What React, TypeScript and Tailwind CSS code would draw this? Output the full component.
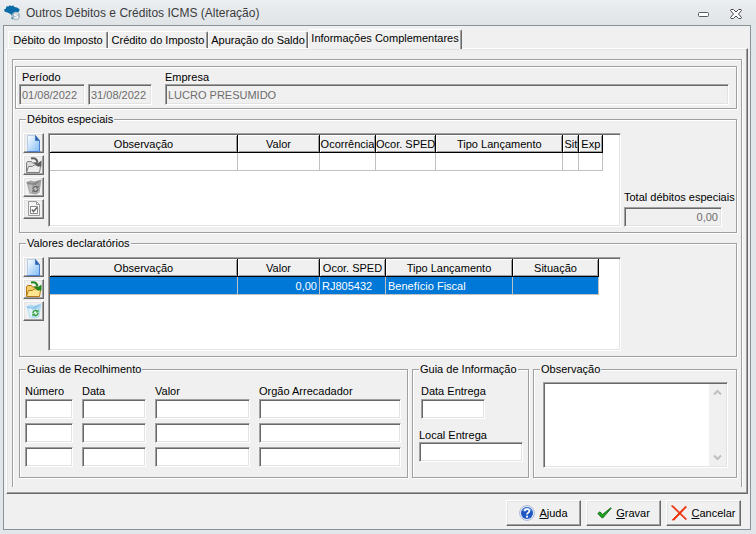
import type { ReactNode } from 'react';
import clsx from 'clsx';

const SUNKEN =
  'border border-t-[#a0a0a0] border-l-[#a0a0a0] border-r-white border-b-white shadow-[inset_1px_1px_0_#696969,inset_-1px_-1px_0_#e3e3e3]';
const RAISED =
  'border border-t-white border-l-white border-r-[#696969] border-b-[#696969] shadow-[inset_-1px_-1px_0_#a0a0a0,inset_1px_1px_0_#e3e3e3]';
const ETCHED = 'border border-[#a0a0a0] shadow-[1px_1px_0_#fff,inset_1px_1px_0_#fff]';

interface Column {
  title: string;
  width: string;
  align?: 'right';
}

const debitColumns: Column[] = [
  { title: 'Observação', width: 'w-[188px]' },
  { title: 'Valor', width: 'w-[82px]', align: 'right' },
  { title: 'Ocorrência', width: 'w-[56px]' },
  { title: 'Ocor. SPED', width: 'w-[60px]' },
  { title: 'Tipo Lançamento', width: 'w-[127px]' },
  { title: 'Sit', width: 'w-[16px]' },
  { title: 'Exp', width: 'w-[24px]' },
];

const valueColumns: Column[] = [
  { title: 'Observação', width: 'w-[188px]' },
  { title: 'Valor', width: 'w-[82px]', align: 'right' },
  { title: 'Ocor. SPED', width: 'w-[66px]' },
  { title: 'Tipo Lançamento', width: 'w-[127px]' },
  { title: 'Situação', width: 'w-[86px]' },
];

const BrazilIcon = () => (
  <svg width="17" height="16" viewBox="0 0 17 16" aria-hidden="true">
    <path
      d="M0 4.5 2 3.4 2.4 1.2 4.5 1.6 5.6.2 7 1 9.4.4 10.4 2 13 2.6 15.6 4.2 15.2 6.2 13.8 7.6 13.4 10.4 11.2 11.6 10 13 8.6 14.6 7.2 13.2 8 11.6 7.4 9.8 5.6 8.4 3.4 7.4.8 6.8Z"
      fill="#0b6ba6"
    />
    <circle cx="12" cy="11" r="4.2" fill="#a9bac4" />
    <path
      d="M13.8 9.3c-.8-.8-3.1-.8-3.1.5 0 1.5 3.1.8 3.1 2.3 0 1.3-2.5 1.3-3.4.4"
      fill="none"
      stroke="#fff"
      strokeWidth="1.2"
    />
  </svg>
);

const PageIcon = ({ id }: { id: string }) => (
  <svg width="15" height="17" viewBox="0 0 15 17" aria-hidden="true">
    <defs>
      <linearGradient id={id} x1="0" y1="0" x2="1" y2="1">
        <stop offset="0" stopColor="#fff" />
        <stop offset="1" stopColor="#7fbcf4" />
      </linearGradient>
    </defs>
    <path d="M1.5.5h8l4 5v11h-12z" fill={`url(#${id})`} />
    <path d="M1.5 16V.5h8" fill="none" stroke="#b5cbea" />
    <path d="M13.5 5.5v11h-12" fill="none" stroke="#4f7fd0" />
    <path d="M9.5.5v5h4z" fill="#2a62b4" stroke="#3a6cb5" strokeWidth=".8" />
  </svg>
);

const FolderIcon = ({ disabled }: { disabled?: boolean }) => {
  const line = disabled ? '#7d7d7d' : '#b57a13';
  const arrow = disabled ? '#5f5f5f' : '#23841f';
  return (
    <svg width="17" height="17" viewBox="0 0 17 17" aria-hidden="true">
      <path d="M1.5 15V6l1-1.5h4l1 1.5h5v8z" fill={disabled ? '#dadada' : '#f3cf6b'} stroke={line} />
      <path d="M1.5 15.5 3.5 9.500h4l1.500-1.500h5l1.500 1.500-1 6z" fill={disabled ? '#ededed' : '#ffe58f'} stroke={line} />
      <path d="M6 1.500c4-1 6 .5 6.500 4" fill="none" stroke={arrow} strokeWidth="2" />
      <path d="M8.500 5.500h3l1.500.5 3.500-2.500v6h-4z" fill={arrow} />
    </svg>
  );
};

const BinIcon = ({ disabled }: { disabled?: boolean }) => {
  const mark = disabled ? '#666' : '#2c9a3a';
  return (
    <svg width="16" height="16" viewBox="0 0 16 16" aria-hidden="true">
      <path d="M.5 3l4.500-1.500 3 1L15.500.5 13.500 13.500 10 15.500 3.500 14.500Z" fill={disabled ? '#a3a3a3' : '#b4dcf3'} />
      <path d="M.5 3l5.500 1.500L15 1l-3.500 3.500L9 6 1.500 5Z" fill={disabled ? '#888' : '#8fc4ea'} />
      <path d="M2.500 5.500 6 6v8l-2-.5Z" fill={disabled ? '#bdbdbd' : '#e0f3fd'} />
      <circle cx="9.500" cy="10" r="3.600" fill={disabled ? '#c4c4c4' : '#e4f7ee'} />
      <path d="M7 10c0-2.500 3-3.300 4.500-1.500M12 10c0 2.500-3 3.300-4.500 1.500" fill="none" stroke={mark} strokeWidth="1.400" />
      <path d="M12.600 6.800v2.800H9.800zM6.400 13.200v-2.800h2.800z" fill={mark} />
    </svg>
  );
};

const CheckPageIcon = () => (
  <svg width="16" height="16" viewBox="0 0 16 16" aria-hidden="true">
    <path d="M2.500.5h8l3 3v11h-11z" fill="#f4f4f4" stroke="#9a9a9a" />
    <path d="M10.500.5v3h3" fill="none" stroke="#9a9a9a" />
    <path d="M4.500 5.500h7v7h-7z" fill="#fff" stroke="#858585" />
    <path d="M5.800 8.500 7.500 10.500 11 6.500" fill="none" stroke="#666" strokeWidth="1.500" />
  </svg>
);

const HelpIcon = () => (
  <svg width="16" height="16" viewBox="0 0 16 16" aria-hidden="true">
    <circle cx="8" cy="8" r="7.500" fill="#dfe5f3" stroke="#b3bfdc" />
    <circle cx="8" cy="8" r="6" fill="#1f56c3" />
    <path d="M3 6a5.300 5.300 0 0 1 10 0c-3-1.500-7-1.500-10 0z" fill="#6f9cec" />
    <path d="M5.800 6.300c0-3 4.600-2.800 4.600-.3C10.400 7.600 8 7.700 8 9.500" fill="none" stroke="#fff" strokeWidth="1.700" />
    <circle cx="8" cy="11.700" r="1.100" fill="#fff" />
  </svg>
);

const SaveIcon = () => (
  <svg width="15" height="12" viewBox="0 0 15 12" aria-hidden="true">
    <path d="M.8 6.500 3 4.800 5.600 7.400 13.800.8 14.200 1.300 6 10.800 4.800 10.800Z" fill="#1fa51b" stroke="#0d5c10" strokeWidth=".8" />
  </svg>
);

const CancelIcon = () => (
  <svg width="16" height="16" viewBox="0 0 16 16" aria-hidden="true">
    <path d="M.5 1 2 .8 15.500 14 14.500 14.500ZM14.500 1.200 15.500 2 3.200 15 1.200 15Z" fill="#ee3410" stroke="#ee3410" strokeWidth=".9" />
  </svg>
);

const ToolButton = ({ label, disabled, children }: { label: string; disabled?: boolean; children: ReactNode }) => (
  <button
    type="button"
    aria-label={label}
    disabled={disabled}
    className={clsx('flex h-5 w-[21px] items-center justify-center bg-[#f0f0f0]', RAISED)}
  >
    {children}
  </button>
);

const Field = ({ label }: { label: string }) => (
  <input aria-label={label} className={clsx('block h-5 w-full min-w-0 bg-white px-1', SUNKEN)} />
);

const Group = ({ title, className, children }: { title: string; className?: string; children: ReactNode }) => (
  <fieldset className={clsx('min-w-0', ETCHED, className)}>
    <legend className="ml-[6px] bg-[#f0f0f0] px-px whitespace-nowrap">{title}</legend>
    {children}
  </fieldset>
);

const DataGrid = ({ columns, row, selected }: { columns: Column[]; row: string[]; selected?: boolean }) => (
  <div className={clsx('h-[94px] min-w-0 flex-1 overflow-hidden bg-white p-px', SUNKEN)}>
    <table className="table-fixed border-separate border-spacing-0">
      <thead>
        <tr className="h-[18px]">
          {columns.map((col) => (
            <th
              key={col.title}
              scope="col"
              className={clsx(
                'overflow-hidden border-r border-b border-black bg-[#f0f0f0] p-0 text-center font-normal whitespace-nowrap shadow-[inset_1px_1px_0_#fff,inset_-1px_-1px_0_#a0a0a0]',
                col.width,
              )}
            >
              {col.title}
            </th>
          ))}
        </tr>
      </thead>
      <tbody>
        <tr className={clsx('h-[18px]', selected && 'bg-[#0078d7] text-white')}>
          {columns.map((col, i) => (
            <td
              key={col.title}
              className={clsx(
                'border-r border-b border-[#c0c0c0] py-0 whitespace-nowrap',
                col.align === 'right' ? 'pr-[2px] text-right' : 'pl-[2px]',
              )}
            >
              {row[i]}
            </td>
          ))}
        </tr>
      </tbody>
    </table>
  </div>
);

const tabs = ['Débito do Imposto', 'Crédito do Imposto', 'Apuração do Saldo', 'Informações Complementares'];

const Tabs = () => (
  <div role="tablist" className="relative z-10 flex h-[23px] items-end pl-1">
    {tabs.map((tab, i) => {
      const active = i === tabs.length - 1;
      return (
        <button
          key={tab}
          type="button"
          role="tab"
          aria-selected={active}
          className={clsx(
            'rounded-t-[2px] border-t border-r border-l border-t-white border-r-[#696969] border-l-white bg-[#f0f0f0] whitespace-nowrap shadow-[inset_-1px_0_0_#a0a0a0]',
            active ? 'h-5 w-[154px] pb-1' : 'mb-px h-[17px] w-[100px]',
          )}
        >
          {tab}
        </button>
      );
    })}
  </div>
);

const guideColumns = ['Número', 'Data', 'Valor', 'Orgão Arrecadador'];

const actions = [
  { key: 'A', rest: 'juda', icon: <HelpIcon /> },
  { key: 'G', rest: 'ravar', icon: <SaveIcon /> },
  { key: 'C', rest: 'ancelar', icon: <CancelIcon /> },
];

export default function App() {
  return (
    <div className="flex min-h-screen flex-col bg-[#e1e6ea] font-['Liberation_Sans',Arial,sans-serif] text-[11px] leading-[14px] text-black">
      <header className="flex h-[25px] items-center bg-linear-to-b from-[#eceef1] to-[#dfe4e7] pr-[14px] pl-1 text-[#3c3c3c]">
        <BrazilIcon />
        <h1 className="ml-[5px] flex-1 text-[12px]">Outros Débitos e Créditos ICMS (Alteração)</h1>
        <button type="button" aria-label="Minimizar" className="mr-[21px] pt-1">
          <svg width="11" height="5" viewBox="0 0 11 5">
            <rect x=".5" y=".5" width="10" height="4" rx="1" fill="#fff" stroke="#55585d" />
          </svg>
        </button>
        <button type="button" aria-label="Fechar" className="pt-[2px]">
          <svg width="12" height="10" viewBox="0 0 12 10">
            <path
              d="M1 .5h2.500L6 3 8.500.5H11L11.500 1.500 8.500 5l3 3.500-.5 1H8.500L6 7 3.500 9.500H1L.5 8.500 3.500 5 .5 1.500z"
              fill="#fff"
              stroke="#4a4d52"
            />
          </svg>
        </button>
      </header>

      <main className="mr-[5px] mb-1 ml-[3px] flex flex-1 flex-col border border-[#8a9296] bg-[#f0f0f0]">
        <Tabs />

        <div className={clsx('mx-[2px] -mt-px px-[5px] pt-[10px] pb-[6px]', RAISED)}>
          <div className="border border-b-0 border-[#a0a0a0] pt-[6px] pr-[4px] pb-[9px] pl-[2px] shadow-[1px_0_0_#fff,inset_1px_1px_0_#fff]">
            <div className={clsx('flex h-[43px] px-[3px] pt-[3px]', ETCHED)}>
              <div className="mr-[13px]">
                <label htmlFor="periodo-inicio" className="block pl-[3px]">
                  Período
                </label>
                <div className="flex gap-[3px]">
                  <input
                    id="periodo-inicio"
                    disabled
                    defaultValue="01/08/2022"
                    className={clsx('h-[21px] w-[66px] px-[2px] text-[#6d6d6d]', SUNKEN)}
                  />
                  <input
                    aria-label="Período final"
                    disabled
                    defaultValue="31/08/2022"
                    className={clsx('h-[21px] w-[64px] px-[2px] text-[#6d6d6d]', SUNKEN)}
                  />
                </div>
              </div>
              <div className="mr-[4px] flex-1">
                <label htmlFor="empresa" className="block">
                  Empresa
                </label>
                <input
                  id="empresa"
                  disabled
                  defaultValue="LUCRO PRESUMIDO"
                  className={clsx('h-[21px] w-full px-[2px] text-[#6d6d6d]', SUNKEN)}
                />
              </div>
            </div>

            <div className="pl-1">
              <Group title="Débitos especiais" className="mt-[3px] pb-[5px]">
                <div className="flex pt-[7px] pl-[3px]">
                  <div className="mr-[4px] flex flex-col gap-[2px]">
                    <ToolButton label="Novo débito">
                      <PageIcon id="page-debito" />
                    </ToolButton>
                    <ToolButton label="Abrir débito" disabled>
                      <FolderIcon disabled />
                    </ToolButton>
                    <ToolButton label="Excluir débito" disabled>
                      <BinIcon disabled />
                    </ToolButton>
                    <ToolButton label="Conferir débito" disabled>
                      <CheckPageIcon />
                    </ToolButton>
                  </div>
                  <DataGrid columns={debitColumns} row={['', '', '', '', '', '', '']} />
                  <div className="flex w-[115px] flex-col justify-end pl-[3px]">
                    <label htmlFor="total-debitos" className="mb-[3px] whitespace-nowrap">
                      Total débitos especiais
                    </label>
                    <input
                      id="total-debitos"
                      disabled
                      defaultValue="0,00"
                      className={clsx('h-5 w-[98px] px-[3px] text-right text-[#6d6d6d]', SUNKEN)}
                    />
                  </div>
                </div>
              </Group>

              <Group title="Valores declaratórios" className="mt-[3px] pb-[5px]">
                <div className="flex pt-[7px] pl-[3px]">
                  <div className="mr-[4px] flex flex-col gap-[2px]">
                    <ToolButton label="Novo valor">
                      <PageIcon id="page-valor" />
                    </ToolButton>
                    <ToolButton label="Abrir valor">
                      <FolderIcon />
                    </ToolButton>
                    <ToolButton label="Excluir valor">
                      <BinIcon />
                    </ToolButton>
                  </div>
                  <DataGrid columns={valueColumns} row={['', '0,00', 'RJ805432', 'Benefício Fiscal', '']} selected />
                  <div className="w-[115px]" />
                </div>
              </Group>

              <div className="mt-[5px] grid grid-cols-[389fr_117fr_204fr] gap-[4px]">
                <Group title="Guias de Recolhimento">
                  <div className="grid grid-cols-[48fr_64fr_95fr_142fr] gap-x-[9px] gap-y-[4px] pt-[8px] pr-[6px] pl-[5px]">
                    {guideColumns.map((name) => (
                      <div key={name} className="flex flex-col gap-[4px]">
                        <span className="-mb-[3px] whitespace-nowrap">{name}</span>
                        <Field label={`${name} 1`} />
                        <Field label={`${name} 2`} />
                        <Field label={`${name} 3`} />
                      </div>
                    ))}
                  </div>
                </Group>

                <Group title="Guia de Informação">
                  <div className="flex flex-col pt-[8px] pr-[5px] pb-[15px] pl-[6px]">
                    <label htmlFor="data-entrega" className="mb-px pl-[2px]">
                      Data Entrega
                    </label>
                    <input id="data-entrega" className={clsx('ml-[2px] h-5 w-16 bg-white px-1', SUNKEN)} />
                    <label htmlFor="local-entrega" className="mt-[9px]">
                      Local Entrega
                    </label>
                    <input id="local-entrega" className={clsx('h-5 w-full bg-white px-1', SUNKEN)} />
                  </div>
                </Group>

                <Group title="Observação">
                  <div className={clsx('mt-[6px] mr-[8px] ml-[9px] flex h-[86px] bg-white p-[1px]', SUNKEN)}>
                    <textarea aria-label="Observação" className="min-w-0 flex-1 resize-none overflow-hidden p-1 outline-none" />
                    <div className="flex w-[17px] flex-col items-center justify-between bg-[#f0f0f0] py-[5px]">
                      <button type="button" aria-label="Rolar para cima">
                        <svg width="9" height="7" viewBox="0 0 9 7">
                          <path d="M1 5.500 4.500 2 8 5.500" fill="none" stroke="#bfbfbf" strokeWidth="2" />
                        </svg>
                      </button>
                      <button type="button" aria-label="Rolar para baixo">
                        <svg width="9" height="7" viewBox="0 0 9 7">
                          <path d="M1 1.500 4.500 5 8 1.500" fill="none" stroke="#bfbfbf" strokeWidth="2" />
                        </svg>
                      </button>
                    </div>
                  </div>
                </Group>
              </div>
            </div>
          </div>
        </div>

        <footer className="flex justify-end gap-[5px] pt-[6px] pr-[9px] pb-[3px]">
          {actions.map((action) => (
            <button
              key={action.key}
              type="button"
              className={clsx('flex h-[26px] w-[75px] items-center justify-center gap-1 bg-[#f0f0f0]', RAISED)}
            >
              {action.icon}
              <span>
                <u>{action.key}</u>
                {action.rest}
              </span>
            </button>
          ))}
        </footer>
      </main>
    </div>
  );
}
